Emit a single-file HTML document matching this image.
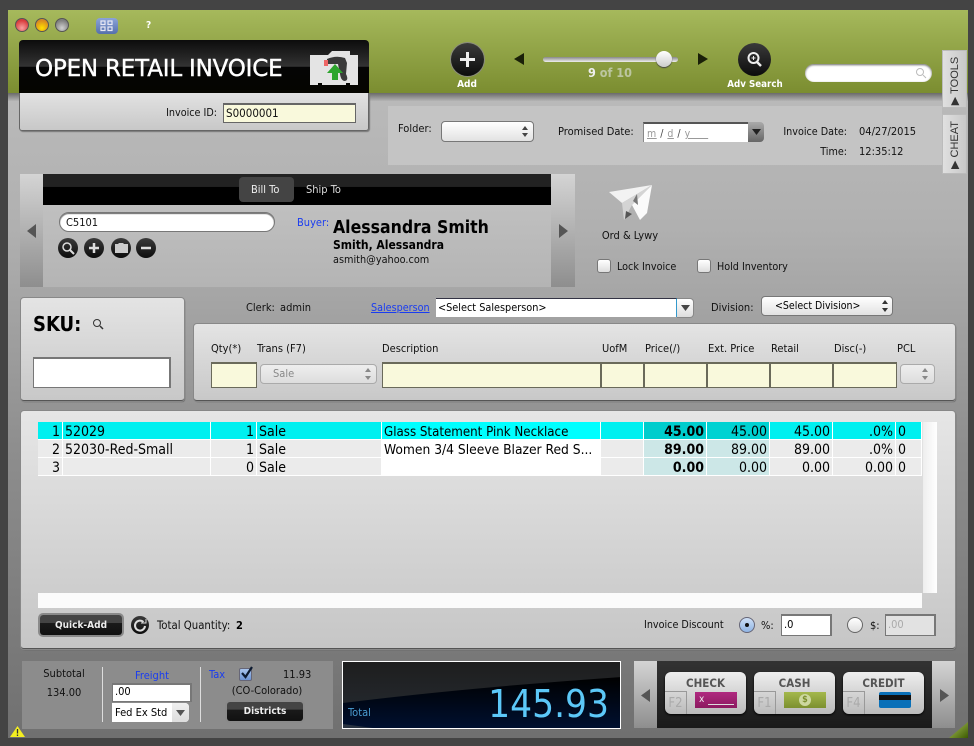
<!DOCTYPE html>
<html><head><meta charset="utf-8"><style>
html,body{margin:0;padding:0}
body{width:974px;height:746px;overflow:hidden;position:relative;background:#444;font-family:"DejaVu Sans Condensed","DejaVu Sans","Liberation Sans",sans-serif;font-stretch:condensed;font-size:11px;color:#111}
div,span,svg{position:absolute;box-sizing:border-box}
.l{white-space:nowrap;line-height:16px;height:16px}
.p{background:linear-gradient(#e4e4e4,#c8c8c8);border-radius:3px;box-shadow:0 0 0 1px #888,1px 1px 1px #555;border-bottom:1px solid #555}
.y{background:#f9f9dc;border:1px solid #6a6a5a;border-width:2px 1px 1px 1px}
.w{background:#fff;border:1px solid #777;border-width:2px 2px 1px 1px}
.sel{background:linear-gradient(#fff,#e2e2e2);border:1px solid #777;border-radius:4px}
.dis{background:linear-gradient(#eee,#ddd);border:1px solid #aaa;border-radius:4px}
.c{border-radius:50%;background:linear-gradient(#3a3a3a,#0c0c0c);box-shadow:0 0 0 1px #8a8a80}
.side{background:linear-gradient(#d4d4d4,#8e8e8e)}
.b{background:linear-gradient(#444 0,#444 40%,#1a1a1a 41%,#111);border-radius:3px;color:#eee;font-weight:bold;text-align:center;font-size:10px;line-height:21px;box-shadow:0 0 0 2px #8a8a8a}
.r{position:absolute;height:17px;line-height:21px;font-size:14px;padding:0 2px;white-space:nowrap;overflow:hidden;color:#000}
.pay{background:linear-gradient(#eee,#bbb);border-radius:6px;height:42px;width:81px;top:672px;box-shadow:0 1px 2px #000}
.payt{left:0;right:0;top:3px;text-align:center;font-weight:bold;font-size:11.5px;color:#555;line-height:16px}
.fk{left:0;top:19px;width:22px;height:23px;border:1px solid #999;border-width:1px 1px 0 0;color:#aaa;font-size:13px;line-height:24px;text-align:center}
</style></head><body>

<div style="left:8px;top:10px;width:960px;height:728px;background:linear-gradient(#c0c0c0 0,#b0b0b0 30%,#8e8e8e 60%,#707070 100%)"></div>
<div style="left:8px;top:93px;width:960px;height:8px;background:linear-gradient(#6a6a6a,#b4b4b4)"></div>
<div style="left:8px;top:10px;width:960px;height:83px;background:linear-gradient(#a6b95c,#7b8d30)"></div>

<!-- traffic lights -->
<div style="left:15px;top:18px;width:14px;height:14px;border-radius:50%;border:1px solid #555;background:radial-gradient(circle at 50% 75%,#f8a0a0,#d83c3c 70%)"></div>
<div style="left:35px;top:18px;width:14px;height:14px;border-radius:50%;border:1px solid #555;background:radial-gradient(circle at 50% 75%,#ffe000,#d88a20 70%)"></div>
<div style="left:55px;top:18px;width:14px;height:14px;border-radius:50%;border:1px solid #555;background:radial-gradient(circle at 50% 75%,#d0d0d0,#808080 70%)"></div>
<div style="left:96px;top:18px;width:22px;height:16px;border-radius:4px;background:linear-gradient(#8ba3d8,#5570ac)"></div>
<svg style="left:100px;top:20px" width="14" height="12" fill="none" stroke="#e8e8f4" stroke-width="1.2"><rect x="1" y="1" width="4" height="3.5"/><rect x="8" y="1" width="4" height="3.5"/><rect x="1" y="7" width="4" height="3.5"/><rect x="8" y="7" width="4" height="3.5"/></svg>
<div class="l" style="left:146px;top:18px;color:#fff;font-weight:bold;font-size:10px">?</div>

<!-- title -->
<div style="left:19px;top:93px;width:350px;height:38px;background:linear-gradient(#e2e2e2,#c8c8c8);border-radius:0 0 3px 3px;border:1px solid #666;border-top:0;box-shadow:1px 1px 1px #777"></div>
<div style="left:19px;top:40px;width:350px;height:53px;border-radius:4px 4px 0 0;background:linear-gradient(#0c0c0c 0,#333 50%,#050505 51%,#050500 100%)"></div>
<div class="l" style="left:35px;top:56px;height:26px;line-height:26px;color:#fff;font-size:23px;font-family:'DejaVu Sans',sans-serif;font-stretch:normal;letter-spacing:-.2px;-webkit-text-stroke:.4px #fff">OPEN RETAIL INVOICE</div>
<svg style="left:310px;top:50px" width="48" height="36"><path d="M0 5H18L22 1H40V5H48V35H40V33H36V35H12V33H8V35H0Z" fill="#e4e4e4"/><path d="M17 9Q26 5 35 8L37 13 36 24Q39 30 35 31 31 31 30 24L28 14H17Z" fill="#3a3a3a"/><rect x="14" y="10" width="4" height="6" fill="#e66"/><path d="M25 14L33 23H28V30H22V23H17Z" fill="#2da52d"/></svg>
<div class="l" style="right:757px;top:105px;font-size:10.7px">Invoice ID:</div>
<div class="y" style="left:223px;top:103px;width:133px;height:20px;border-color:#666"></div>
<div class="l" style="left:226px;top:105px;font-size:11.5px">S0000001</div>

<!-- top controls -->
<div class="c" style="left:451px;top:43px;width:33px;height:33px"></div>
<svg style="left:451px;top:43px" width="33" height="33"><path d="M16.500 9v15M9 16.500h15" stroke="#eee" stroke-width="3"/></svg>
<div class="l" style="left:437px;top:77px;width:60px;text-align:center;color:#fff;font-weight:bold;font-size:10px">Add</div>
<svg style="left:514px;top:52px" width="11" height="14"><path d="M10 1V13L0 7Z" fill="#1a2008"/></svg>
<div style="left:543px;top:57px;width:135px;height:5px;border-radius:3px;background:linear-gradient(#888,#eee)"></div>
<div style="left:656px;top:51px;width:16px;height:16px;border-radius:50%;background:linear-gradient(#fff,#ccc);box-shadow:0 1px 1px #444"></div>
<div class="l" style="left:560px;top:65px;width:100px;text-align:center;font-weight:bold;font-size:12.5px;color:#bcc6a0"><b style="position:static;color:#eee">9</b> of 10</div>
<svg style="left:697px;top:52px" width="11" height="14"><path d="M1 1V13L11 7Z" fill="#1a2008"/></svg>
<div class="c" style="left:738px;top:43px;width:33px;height:33px;box-shadow:none"></div>
<svg style="left:738px;top:43px" width="33" height="33" fill="none" stroke="#eee"><circle cx="15.500" cy="15" r="5" stroke-width="2"/><path d="M19 19l4 4" stroke-width="2.500"/><path d="M13.500 15h4M15.500 13v4"/></svg>
<div class="l" style="left:715px;top:77px;width:80px;text-align:center;color:#fff;font-weight:bold;font-size:9.7px">Adv Search</div>
<div style="left:805px;top:64px;width:127px;height:18px;border-radius:9px;background:#fff;box-shadow:inset 0 1px 2px #666"></div>
<svg style="left:915px;top:67px" width="12" height="12" fill="none" stroke="#bbb"><circle cx="5" cy="5" r="3.500"/><path d="M8 8l3 3"/></svg>

<!-- tabs -->
<div style="left:942px;top:50px;width:25px;height:58px;background:linear-gradient(90deg,#e0e0e0,#c8c8c8);border:1px solid #bbb"></div>
<div style="left:942px;top:114px;width:25px;height:60px;background:linear-gradient(90deg,#e0e0e0,#c8c8c8);border:1px solid #bbb"></div>
<div class="l" style="left:925px;top:73px;width:60px;text-align:center;transform:rotate(-90deg);font-size:11px;color:#333;font-family:'Liberation Sans',sans-serif;font-stretch:normal">▶ TOOLS</div>
<div class="l" style="left:925px;top:137px;width:60px;text-align:center;transform:rotate(-90deg);font-size:11px;color:#333;font-family:'Liberation Sans',sans-serif;font-stretch:normal">▶ CHEAT</div>

<!-- folder panel -->
<div style="left:388px;top:106px;width:554px;height:59px;background:#c4c4c4"></div>
<div class="l" style="left:398px;top:121px">Folder:</div>
<div class="sel" style="left:441px;top:121px;width:93px;height:21px"></div>
<svg style="left:521px;top:126px" width="8" height="11" fill="#444"><path d="M4 0l3 4H1zM4 11L1 7h6z"/></svg>
<div class="l" style="left:558px;top:124px">Promised Date:</div>
<div style="left:643px;top:122px;width:105px;height:20px;background:#fff;border-top:2px solid #555;border-left:1px solid #888"></div>
<div class="l" style="left:647px;top:126px;color:#999;font-size:10.500px;letter-spacing:.5px"><u>m</u> <span style="position:static;color:#444">/</span> <u>d</u> <span style="position:static;color:#444">/</span> <u>y&nbsp;&nbsp;&nbsp;&nbsp;&nbsp;</u></div>
<div style="left:748px;top:122px;width:16px;height:20px;border-radius:0 4px 4px 0;background:linear-gradient(#aaa,#666)"></div>
<svg style="left:752px;top:129px" width="9" height="6"><path d="M0 0H9L4.500 6Z" fill="#222"/></svg>
<div class="l" style="right:127px;top:124px;font-size:10.7px">Invoice Date:</div>
<div class="l" style="left:859px;top:124px">04/27/2015</div>
<div class="l" style="right:127px;top:144px;font-size:10.7px">Time:</div>
<div class="l" style="left:859px;top:144px">12:35:12</div>

<!-- customer -->
<div class="side" style="left:20px;top:174px;width:23px;height:113px"></div>
<div class="side" style="left:551px;top:174px;width:24px;height:113px"></div>
<div style="left:43px;top:174px;width:508px;height:113px;background:linear-gradient(#c4c4c4,#b4b4b4)"></div>
<div style="left:43px;top:174px;width:508px;height:31px;background:linear-gradient(#222 0,#222 41%,#000 42%)"></div>
<svg style="left:27px;top:224px" width="10" height="14"><path d="M9 0V14L0 7Z" fill="#555"/></svg>
<svg style="left:558px;top:224px" width="10" height="14"><path d="M1 0V14L10 7Z" fill="#555"/></svg>
<div style="left:239px;top:177px;width:55px;height:25px;border-radius:4px;background:#444"></div>
<div class="l" style="left:251px;top:182px;color:#eee">Bill To</div>
<div class="l" style="left:306px;top:182px;color:#ddd">Ship To</div>
<div style="left:59px;top:212px;width:216px;height:20px;border-radius:10px;background:#fff;border:1px solid #777;box-shadow:inset 0 1px 1px #666"></div>
<div class="l" style="left:66px;top:215px">C5101</div>
<div class="c" style="left:58px;top:238px;width:20px;height:20px;box-shadow:none"></div>
<div class="c" style="left:84px;top:238px;width:20px;height:20px;box-shadow:none"></div>
<div class="c" style="left:111px;top:238px;width:20px;height:20px;box-shadow:none"></div>
<div class="c" style="left:136px;top:238px;width:20px;height:20px;box-shadow:none"></div>
<svg style="left:58px;top:238px" width="100" height="20" fill="none" stroke="#ddd"><circle cx="9" cy="9" r="4" stroke-width="1.500"/><path d="M12 12l4 4" stroke-width="2"/><path d="M31 10h10M36 5v10" stroke-width="2.500"/><path d="M57 6h3l1-1h4l1 1h4v9H57z" fill="#ccc" stroke="none"/><path d="M83 10h10" stroke-width="2.500"/></svg>
<div class="l" style="left:297px;top:215px;color:#1a3cf0">Buyer:</div>
<div class="l" style="left:333px;top:218px;height:20px;line-height:20px;font-size:17.5px;font-weight:bold;color:#000">Alessandra Smith</div>
<div class="l" style="left:333px;top:237px;font-size:12px;font-weight:bold;color:#000">Smith, Alessandra</div>
<div class="l" style="left:333px;top:252px;font-size:10.8px">asmith@yahoo.com</div>

<!-- plane -->
<svg style="left:608px;top:183px" width="46" height="38"><path d="M44 2L1 9 14 20Z" fill="#f2f2f2"/><path d="M44 2L14 20 16 37 24 22Z" fill="#d4d4d4"/><path d="M44 2L24 22 32 37 39 30Z" fill="#fafafa"/><path d="M29 11l-4 7 5 4z" fill="#777"/><path d="M17 36l1-8 6 3z" fill="#555"/></svg>
<div class="l" style="left:600px;top:228px;width:60px;text-align:center">Ord &amp; Lywy</div>
<div style="left:597px;top:259px;width:14px;height:14px;border-radius:3px;background:linear-gradient(#fff,#ddd);border:1px solid #777"></div>
<div class="l" style="left:617px;top:259px;font-size:10.7px">Lock Invoice</div>
<div style="left:697px;top:259px;width:14px;height:14px;border-radius:3px;background:linear-gradient(#fff,#ddd);border:1px solid #777"></div>
<div class="l" style="left:717px;top:259px;font-size:10.7px">Hold Inventory</div>

<!-- sku -->
<div class="p" style="left:21px;top:298px;width:163px;height:103px"></div>
<div class="l" style="left:33px;top:312px;height:24px;line-height:24px;font-size:20px;font-weight:bold;color:#000">SKU:</div>
<svg style="left:92px;top:318px" width="12" height="12" fill="none" stroke="#333"><circle cx="5" cy="5" r="3.500"/><path d="M8 8l3 3" stroke-width="1.500"/></svg>
<div class="w" style="left:33px;top:357px;width:138px;height:31px"></div>

<!-- clerk row -->
<div class="l" style="left:246px;top:300px">Clerk:</div>
<div class="l" style="left:280px;top:300px">admin</div>
<div class="l" style="left:371px;top:300px;color:#1a3cf0;text-decoration:underline;font-size:10.7px">Salesperson</div>
<div style="left:436px;top:298px;width:241px;height:19px;background:#fff;border-top:1px solid #334;border-right:1px solid #39c"></div>
<div class="l" style="left:438px;top:300px;font-size:10.8px;color:#000">&lt;Select Salesperson&gt;</div>
<div style="left:677px;top:298px;width:17px;height:20px;background:linear-gradient(#fff,#ddd);border:1px solid #888;border-left:0;border-radius:0 4px 4px 0"></div>
<svg style="left:681px;top:305px" width="9" height="6"><path d="M0 0H9L4.500 6Z" fill="#444"/></svg>
<div class="l" style="left:711px;top:300px">Division:</div>
<div class="sel" style="left:761px;top:296px;width:132px;height:20px"></div>
<div class="l" style="left:775px;top:298px;font-size:10.5px;color:#000">&lt;Select Division&gt;</div>
<svg style="left:881px;top:300px" width="8" height="12" fill="#333"><path d="M4 0l3 4H1zM4 12L1 8h6z"/></svg>

<!-- form panel -->
<div class="p" style="left:194px;top:324px;width:761px;height:77px"></div>
<div class="l" style="left:211px;top:341px">Qty(*)</div>
<div class="l" style="left:257px;top:341px">Trans (F7)</div>
<div class="l" style="left:382px;top:341px">Description</div>
<div class="l" style="left:602px;top:341px">UofM</div>
<div class="l" style="left:645px;top:341px">Price(/)</div>
<div class="l" style="left:708px;top:341px">Ext. Price</div>
<div class="l" style="left:771px;top:341px">Retail</div>
<div class="l" style="left:834px;top:341px">Disc(-)</div>
<div class="l" style="left:897px;top:341px">PCL</div>
<div class="y" style="left:211px;top:362px;width:46px;height:26px"></div>
<div class="dis" style="left:260px;top:364px;width:117px;height:20px"></div>
<div class="l" style="left:273px;top:366px;color:#888">Sale</div>
<svg style="left:364px;top:368px" width="8" height="12" fill="#888"><path d="M4 0l3 4H1zM4 12L1 8h6z"/></svg>
<div class="y" style="left:382px;top:362px;width:219px;height:26px"></div>
<div class="y" style="left:601px;top:362px;width:43px;height:26px"></div>
<div class="y" style="left:644px;top:362px;width:63px;height:26px"></div>
<div class="y" style="left:707px;top:362px;width:63px;height:26px"></div>
<div class="y" style="left:770px;top:362px;width:63px;height:26px"></div>
<div class="y" style="left:833px;top:362px;width:64px;height:26px"></div>
<div class="dis" style="left:900px;top:364px;width:35px;height:20px"></div>
<svg style="left:921px;top:368px" width="8" height="12" fill="#888"><path d="M4 0l3 4H1zM4 12L1 8h6z"/></svg>

<!-- grid panel -->
<div class="p" style="left:21px;top:411px;width:934px;height:238px;background:linear-gradient(#e6e6e6,#c6c6c6)"></div>
<div style="left:38px;top:422px;width:884px;height:54px;background:#fff"></div>
<div style="left:923px;top:422px;width:14px;height:171px;background:linear-gradient(90deg,#eee,#fff)"></div>
<div style="left:38px;top:593px;width:884px;height:15px;background:#fbfbfb"></div>

<div class="r" style="left:38px;top:422px;width:24px;background:#00f0f0;text-align:right">1</div>
<div class="r" style="left:63px;top:422px;width:147px;background:#00f0f0">52029</div>
<div class="r" style="left:211px;top:422px;width:45px;background:#00f0f0;text-align:right">1</div>
<div class="r" style="left:257px;top:422px;width:124px;background:#00f0f0">Sale</div>
<div class="r" style="left:382px;top:422px;width:218px;background:#00ffff;font-size:13.2px">Glass Statement Pink Necklace</div>
<div class="r" style="left:601px;top:422px;width:42px;background:#00f0f0"></div>
<div class="r" style="left:644px;top:422px;width:62px;background:#00cdcd;text-align:right;font-weight:bold">45.00</div>
<div class="r" style="left:707px;top:422px;width:62px;background:#00d2d2;text-align:right">45.00</div>
<div class="r" style="left:770px;top:422px;width:62px;background:#00f0f0;text-align:right">45.00</div>
<div class="r" style="left:833px;top:422px;width:62px;background:#00f0f0;text-align:right">.0%</div>
<div class="r" style="left:896px;top:422px;width:25px;background:#00f0f0">0</div>

<div class="r" style="left:38px;top:440px;width:24px;background:#ebebeb;text-align:right">2</div>
<div class="r" style="left:63px;top:440px;width:147px;background:#ebebeb">52030-Red-Small</div>
<div class="r" style="left:211px;top:440px;width:45px;background:#ebebeb;text-align:right">1</div>
<div class="r" style="left:257px;top:440px;width:124px;background:#ebebeb">Sale</div>
<div class="r" style="left:382px;top:440px;width:218px;background:#fff;font-size:13.7px">Women 3/4 Sleeve Blazer Red S...</div>
<div class="r" style="left:601px;top:440px;width:42px;background:#ebebeb"></div>
<div class="r" style="left:644px;top:440px;width:62px;background:#cce7e7;text-align:right;font-weight:bold">89.00</div>
<div class="r" style="left:707px;top:440px;width:62px;background:#cce7e7;text-align:right">89.00</div>
<div class="r" style="left:770px;top:440px;width:62px;background:#ebebeb;text-align:right">89.00</div>
<div class="r" style="left:833px;top:440px;width:62px;background:#ebebeb;text-align:right">.0%</div>
<div class="r" style="left:896px;top:440px;width:25px;background:#ebebeb">0</div>

<div class="r" style="left:38px;top:458px;width:24px;background:#ebebeb;text-align:right">3</div>
<div class="r" style="left:63px;top:458px;width:147px;background:#ebebeb"></div>
<div class="r" style="left:211px;top:458px;width:45px;background:#ebebeb;text-align:right">0</div>
<div class="r" style="left:257px;top:458px;width:124px;background:#ebebeb">Sale</div>
<div class="r" style="left:601px;top:458px;width:42px;background:#ebebeb"></div>
<div class="r" style="left:644px;top:458px;width:62px;background:#cce7e7;text-align:right;font-weight:bold">0.00</div>
<div class="r" style="left:707px;top:458px;width:62px;background:#cce7e7;text-align:right">0.00</div>
<div class="r" style="left:770px;top:458px;width:62px;background:#ebebeb;text-align:right">0.00</div>
<div class="r" style="left:833px;top:458px;width:62px;background:#ebebeb;text-align:right">0.00</div>
<div class="r" style="left:896px;top:458px;width:25px;background:#ebebeb">0</div>

<div class="b" style="left:40px;top:615px;width:82px;height:20px">Quick-Add</div>
<div class="c" style="left:131px;top:616px;width:18px;height:18px;box-shadow:none"></div>
<svg style="left:131px;top:616px" width="18" height="18" fill="none" stroke="#ddd" stroke-width="2"><path d="M12.500 6A5 5 0 1 0 14 10"/><path d="M10 7h5V3" stroke-width="1"/></svg>
<div class="l" style="left:157px;top:618px;font-size:11.3px">Total Quantity:</div>
<div class="l" style="left:236px;top:618px;font-weight:bold;color:#000">2</div>

<div class="l" style="left:644px;top:617px;font-size:10.7px">Invoice Discount</div>
<div style="left:739px;top:617px;width:16px;height:16px;border-radius:50%;background:linear-gradient(#cfe0f6,#8fb4e4);border:1px solid #667"></div>
<div style="left:745px;top:623px;width:4px;height:4px;border-radius:50%;background:#111"></div>
<div class="l" style="left:761px;top:618px">%:</div>
<div class="w" style="left:781px;top:614px;width:51px;height:22px"></div>
<div class="l" style="left:784px;top:617px;color:#000">.0</div>
<div style="left:847px;top:617px;width:16px;height:16px;border-radius:50%;background:linear-gradient(#fff,#ddd);border:1px solid #666"></div>
<div class="l" style="left:870px;top:618px">$:</div>
<div style="left:885px;top:614px;width:51px;height:22px;background:#e2e2e2;border:1px solid #777;border-width:2px 2px 1px 1px"></div>
<div class="l" style="left:888px;top:617px;color:#aaa">.00</div>

<!-- bottom left -->
<div style="left:22px;top:661px;width:311px;height:68px;background:#8c8c8c"></div>
<div class="l" style="left:24px;top:666px;width:80px;text-align:center">Subtotal</div>
<div class="l" style="left:24px;top:685px;width:80px;text-align:center">134.00</div>
<div style="left:102px;top:667px;width:1px;height:55px;background:#ddd"></div>
<div style="left:200px;top:667px;width:1px;height:55px;background:#ddd"></div>
<div class="l" style="left:112px;top:668px;width:80px;text-align:center;color:#1a3cf0">Freight</div>
<div class="w" style="left:112px;top:683px;width:80px;height:19px"></div>
<div class="l" style="left:115px;top:684px;color:#000">.00</div>
<div style="left:112px;top:703px;width:77px;height:19px;background:#fff;border-radius:0 4px 4px 0"></div>
<div style="left:172px;top:703px;width:17px;height:19px;background:linear-gradient(#f0f0f0,#ddd);border-radius:0 4px 4px 0"></div>
<div class="l" style="left:115px;top:705px;color:#000">Fed Ex Std</div>
<svg style="left:176px;top:710px" width="9" height="6"><path d="M0 0H9L4.500 6Z" fill="#555"/></svg>
<div class="l" style="left:209px;top:667px;color:#1a3cf0">Tax</div>
<div style="left:239px;top:668px;width:13px;height:13px;background:linear-gradient(#a8c4ec,#6c94d4);border:1px solid #667;border-radius:2px"></div>
<svg style="left:239px;top:665px" width="16" height="16" fill="none" stroke="#0c1a30" stroke-width="2.200"><path d="M3 8l3.500 4L13 2"/></svg>
<div class="l" style="left:283px;top:667px">11.93</div>
<div class="l" style="left:217px;top:683px;width:100px;text-align:center">(CO-Colorado)</div>
<div class="b" style="left:227px;top:702px;width:76px;height:19px;line-height:20px">Districts</div>

<svg style="left:10px;top:726px" width="15" height="11"><path d="M7.500 0L15 11H0Z" fill="#f4ee20"/><path d="M7.500 3v4.500M7.500 8.500v1.500" stroke="#333" stroke-width="1.300"/></svg>

<!-- total -->
<div style="left:342px;top:661px;width:279px;height:68px;border:1px solid #fff;background:#1c1c1c;overflow:hidden">
<svg style="left:0;top:0" width="278" height="66"><defs><linearGradient id="g1" x1="0" y1="0" x2="0" y2="1"><stop offset="0" stop-color="#000"/><stop offset="1" stop-color="#001030"/></linearGradient><linearGradient id="g2" x1="0" y1="0" x2="0" y2="1"><stop offset="0" stop-color="#1e1e1e"/><stop offset="1" stop-color="#262c34"/></linearGradient></defs><rect width="278" height="66" fill="url(#g2)"/><path d="M0 41Q120 26 278 15V66H0Z" fill="url(#g1)"/><path d="M0 62L30 66H0Z" fill="#2a3442"/></svg>
</div>
<div class="l" style="left:348px;top:705px;color:#4a9cd0">Total</div>
<div class="l" style="right:365px;top:683px;height:44px;line-height:44px;font-size:38.4px;color:#5cc8f8;font-family:'DejaVu Sans',sans-serif;font-stretch:condensed">145.93</div>

<!-- payment -->
<div style="left:634px;top:661px;width:321px;height:67px;background:linear-gradient(#333,#1a1a1a)"></div>
<div class="side" style="left:634px;top:661px;width:23px;height:67px"></div>
<div class="side" style="left:932px;top:661px;width:23px;height:67px"></div>
<svg style="left:641px;top:689px" width="10" height="13"><path d="M9 0V13L0 6.500Z" fill="#555"/></svg>
<svg style="left:939px;top:689px" width="10" height="13"><path d="M1 0V13L10 6.500Z" fill="#555"/></svg>
<div class="pay" style="left:665px"><div class="payt">CHECK</div><div class="fk">F2</div><div style="left:30px;top:20px;width:42px;height:16px;background:linear-gradient(#b02a80,#8c1a60)"></div><div class="l" style="left:34px;top:20px;color:#eee;font-size:10px">x</div><div style="left:43px;top:32px;width:26px;height:1px;background:#ddd"></div></div>
<div class="pay" style="left:754px"><div class="payt">CASH</div><div class="fk">F1</div><div style="left:30px;top:20px;width:42px;height:16px;background:linear-gradient(#a4b84c,#7c9030)"></div><div style="left:45px;top:22px;width:12px;height:12px;border-radius:50%;background:#cdd8a0;color:#7c9030;font-size:9px;font-weight:bold;line-height:12px;text-align:center">$</div></div>
<div class="pay" style="left:843px"><div class="payt">CREDIT</div><div class="fk">F4</div><div style="left:36px;top:20px;width:32px;height:16px;border-radius:2px;background:#0a70b8"></div><div style="left:36px;top:23px;width:32px;height:5px;background:#111"></div></div>

<svg style="left:949px;top:722px" width="19" height="16"><defs><linearGradient id="g3" x1="0" y1="0" x2="1" y2="1"><stop offset="0" stop-color="#b0c860"/><stop offset="1" stop-color="#3c5a00"/></linearGradient></defs><path d="M19 0V16H0Z" fill="url(#g3)"/></svg>
</body></html>
